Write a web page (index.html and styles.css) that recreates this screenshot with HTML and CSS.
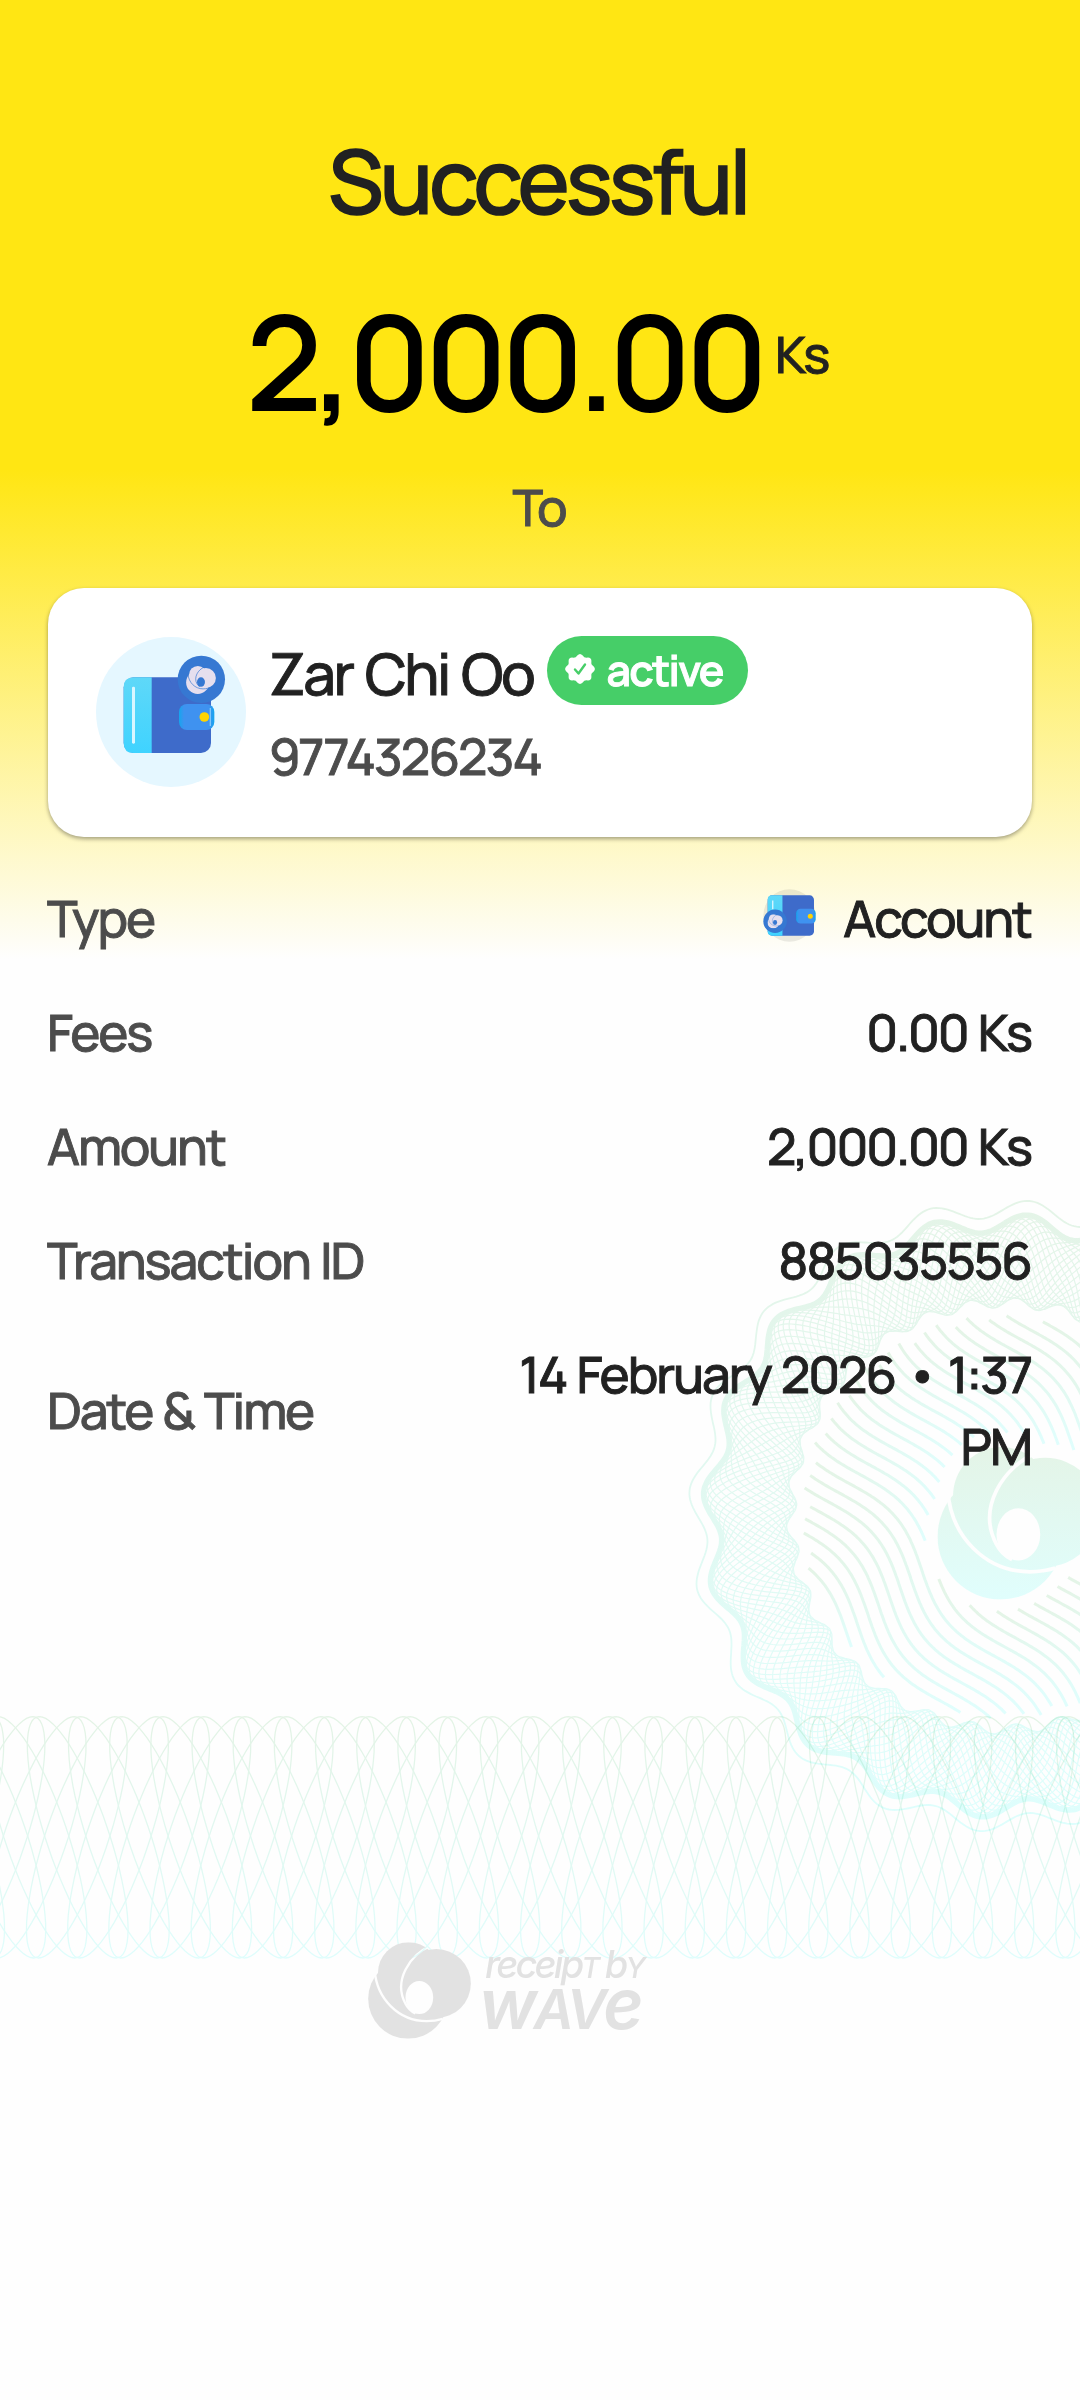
FILE: index.html
```html
<!DOCTYPE html>
<html lang="en">
<head>
<meta charset="utf-8">
<title>Receipt</title>
<link rel="stylesheet" href="styles.css">
</head>
<body>
<svg class="defs" width="0" height="0" aria-hidden="true">
  <defs>
    <mask id="swirl-cut" maskUnits="userSpaceOnUse" x="80" y="60" width="320" height="300">
      <g fill="#fff">
        <circle cx="206" cy="236" r="119.5"/>
        <circle cx="208" cy="158" r="92"/>
        <circle cx="291" cy="190" r="103.5"/>
      </g>
      <g fill="none" stroke="#000" stroke-width="7">
        <path d="M106 150C112 236 178 303 262 303C280 303 294 301 310 296"/>
        <path d="M276 76C210 104 162 182 198 250C204 262 214 273 228 280"/>
      </g>
      <ellipse cx="240" cy="232" rx="41.5" ry="49.5" fill="#000"/>
    </mask>
    <symbol id="swirl" viewBox="86 66 309 290">
      <rect x="80" y="60" width="320" height="300" mask="url(#swirl-cut)"/>
    </symbol>
    <linearGradient id="fold" x1="0" y1="0" x2="0" y2="1"><stop offset="0" stop-color="#5fd8f8"/><stop offset="1" stop-color="#3fd3ff"/></linearGradient>
    <linearGradient id="clasp" x1="0" y1="0" x2="1" y2="0"><stop offset="0" stop-color="#14a6ef"/><stop offset=".14" stop-color="#3f92f0"/><stop offset=".85" stop-color="#3f92f0"/><stop offset="1" stop-color="#14a6ef"/></linearGradient>
    <linearGradient id="line-tint" x1="0" y1="0" x2="0" y2="1"><stop offset="0" stop-color="#e4f4e6"/><stop offset="1" stop-color="#e0fefd"/></linearGradient>
    <linearGradient id="seal-tint" gradientUnits="userSpaceOnUse" x1="0" y1="1200" x2="0" y2="1832"><stop offset="0" stop-color="#e4f4e7"/><stop offset="1" stop-color="#defefd"/></linearGradient>
  </defs>
</svg>

<main class="receipt">
  <svg class="backdrop" viewBox="0 0 1080 2400" aria-hidden="true">
    <g id="seal" fill="none" stroke="url(#seal-tint)"></g>
    <g id="waves" fill="none" stroke="url(#line-tint)" stroke-width="3"></g>
    <use href="#swirl" x="937.3" y="1447" width="162.7" height="152.7" fill="url(#line-tint)"/>
    <g id="band" class="band" fill="none" stroke="url(#line-tint)" stroke-width="1.3"></g>
  </svg>

  <h1 class="title">Successful</h1>
  <div class="total"><span class="total-value">2,000.00</span><span class="total-unit">Ks</span></div>
  <p class="to">To</p>

  <section class="card">
    <svg class="avatar" viewBox="198 201 450 450">
      <circle cx="423" cy="426" r="225" fill="#e5f7ff"/>
      <rect x="281" y="322" width="262" height="227" rx="30" fill="#3e6bca"/>
      <path d="M365 322V549H311Q281 549 281 519V352Q281 322 311 322Z" fill="url(#fold)"/>
      <rect x="306" y="350" width="9" height="171" rx="4" fill="#d9f6ff"/>
      <circle cx="514" cy="328" r="71" fill="#3678d2"/>
      <use href="#swirl" x="468" y="288" width="90" height="84" fill="#e6dfee"/>
      <rect x="447" y="402" width="106" height="78" rx="24" fill="url(#clasp)"/>
      <path d="M541 414V468" stroke="#7fc6fb" stroke-width="4"/>
      <circle cx="523" cy="441" r="14.5" fill="#ffd400"/>
    </svg>
    <div class="payee">
      <div class="payee-top">
        <span class="payee-name">Zar Chi Oo</span>
        <span class="pill">
          <svg class="tick" viewBox="-15 -15 30 30"><path id="rosette" fill="#fff"/><path d="M-5 .5L-1.5 4.5L5 -4.5" fill="none" stroke="#46ce68" stroke-width="2.4" stroke-linecap="round" stroke-linejoin="round"/></svg>
          active
        </span>
      </div>
      <div class="payee-phone">9774326234</div>
    </div>
  </section>

  <dl class="rows">
    <div class="row"><dt>Type</dt><dd class="with-icon">
      <svg class="mini" viewBox="129 86 158 158">
        <circle cx="208" cy="165" r="78" fill="#000" fill-opacity=".08"/>
        <rect x="143" y="105" width="138" height="120" rx="13" fill="#3e6bca"/>
        <path d="M187 105V225H156Q143 225 143 212V118Q143 105 156 105Z" fill="url(#fold)"/>
        <path d="M158 120V146" stroke="#d9f6ff" stroke-width="4"/>
        <circle cx="165" cy="182" r="35" fill="#3678d2"/>
        <use href="#swirl" x="142" y="161" width="46" height="43" fill="#e6dfee"/>
        <rect x="228" y="145" width="58" height="44" rx="13" fill="url(#clasp)"/>
        <circle cx="270" cy="167" r="7.5" fill="#ffd400"/>
      </svg>Account</dd></div>
    <div class="row"><dt>Fees</dt><dd>0.00 Ks</dd></div>
    <div class="row"><dt>Amount</dt><dd>2,000.00 Ks</dd></div>
    <div class="row"><dt>Transaction ID</dt><dd>885035556</dd></div>
    <div class="row"><dt>Date &amp; Time</dt><dd>14 February 2026 • 1:37 PM</dd></div>
  </dl>

  <footer class="brand">
    <svg class="brand-mark" viewBox="86 66 309 290"><use href="#swirl" x="86" y="66" width="309" height="290" fill="#e2e2e2"/></svg>
    <div class="brand-text">
      <div class="brand-by">receip<span class="small">T</span> b<span class="small">Y</span></div>
      <div class="brand-name"><span class="tall">w</span>AV<span class="tall">e</span></div>
    </div>
  </footer>
</main>
<script src="guilloche.js"></script>
</body>
</html>
```
FILE: styles.css
```css
* { box-sizing: border-box; margin: 0; padding: 0; }

body {
  width: 1080px;
  height: 2400px;
  overflow: hidden;
  background: #fefefe;
  font-family: Manrope, Inter, sans-serif;
  font-weight: 500;
  letter-spacing: -.04em;
  color: #212121;
  -webkit-text-stroke: .9px;
}

.defs { position: absolute; }

.receipt {
  position: relative;
  height: 2400px;
  padding: 131px 48px 0;
  overflow: hidden;
  background: linear-gradient(#ffe613 0, #ffe613 470px, #fefefe 960px);
}

.receipt > * { position: relative; }

.receipt > .backdrop {
  position: absolute;
  inset: 0;
  width: 1080px;
  height: 2400px;
}

.band { mix-blend-mode: multiply; }

.title {
  font-size: 87.5px;
  font-weight: 500;
  line-height: 100px;
  letter-spacing: -.04em;
  text-align: center;
  text-indent: -4px;
  -webkit-text-stroke: 1.6px;
}

.total {
  display: flex;
  justify-content: center;
  gap: 12px;
  height: 140px;
  margin-top: 59px;
  padding-right: 5px;
}

.total-value {
  font-size: 129px;
  line-height: 141px;
  letter-spacing: -4.1px;
  color: #000;
  -webkit-text-stroke: 2px;
}

.total-unit {
  margin-top: 28px;
  font-size: 51px;
  line-height: 72px;
  letter-spacing: -.04em;
}

.to {
  margin-top: 41px;
  font-size: 51px;
  line-height: 72px;
  letter-spacing: -.04em;
  text-align: center;
  text-indent: -2px;
  color: #4c4c4c;
}

.card {
  display: flex;
  align-items: flex-start;
  gap: 23px;
  height: 249px;
  margin-top: 45px;
  padding: 49px 48px;
  border-radius: 36px;
  background: #fff;
  box-shadow: 0 2px 4px rgba(0, 0, 0, .36);
}

.avatar { width: 150px; height: 150px; }

.payee { margin-top: -2px; }

.payee-top { display: flex; align-items: flex-start; gap: 13px; }

.payee-name {
  font-size: 58px;
  line-height: 75px;
  letter-spacing: -.04em;
  word-spacing: 2.5px;
}

.pill {
  display: flex;
  align-items: center;
  gap: 12px;
  height: 69px;
  margin-top: 1px;
  padding: 0 25px 3px 18px;
  border-radius: 35px;
  background: #46ce68;
  color: #fff;
  font-size: 43px;
  font-weight: 600;
  letter-spacing: -.04em;
}

.tick { width: 30px; height: 30px; }

.payee-phone {
  margin-top: 16px;
  font-size: 51px;
  line-height: 60px;
  letter-spacing: -.038em;
  color: #4c4c4c;
}

.rows {
  display: flex;
  flex-direction: column;
  gap: 42px;
  margin: 45px 1px 0 -1px;
  font-size: 51px;
  line-height: 72px;
  letter-spacing: -.04em;
}

.row {
  display: flex;
  align-items: center;
  justify-content: space-between;
  word-spacing: 2px;
}

.row dt { color: #4c4c4c; }

.row dd { max-width: 560px; text-align: right; }

.row .with-icon { display: flex; align-items: center; gap: 27px; }

.mini { width: 53px; height: 53px; margin-top: -6px; }

.brand {
  display: flex;
  align-items: flex-start;
  gap: 14px;
  margin: 460px 0 0 320px;
  color: #e2e2e2;
  font-family: Inter, sans-serif;
  font-style: italic;
  -webkit-text-stroke: 0;
}

.brand-mark { width: 103px; height: 97px; }

.brand-by {
  margin-top: 2px;
  font-size: 38px;
  line-height: 40px;
  letter-spacing: -2.8px;
}

.brand-by .small { font-size: 29px; }

.brand-name {
  margin: -4px 0 0 -6px;
  font-size: 55px;
  font-weight: 600;
  line-height: 50px;
  letter-spacing: -3.2px;
}

.brand-name .tall { font-size: 69px; line-height: 40px; }
```
FILE: guilloche.js
```javascript
const NS = 'http://www.w3.org/2000/svg';
const CX = 1004.5, CY = 1516, RAD = Math.PI / 180;

function addPath(parent, points, width) {
  const path = document.createElementNS(NS, 'path');
  path.setAttribute('d', 'M' + points.map(p => p[0].toFixed(1) + ' ' + p[1].toFixed(1)).join('L'));
  if (width) path.setAttribute('stroke-width', width);
  parent.appendChild(path);
}

function ring(radius, step) {
  const pts = [];
  for (let a = 0; a <= 360; a += step) {
    const r = radius(a);
    pts.push([CX + r * Math.sin(a * RAD), CY - r * Math.cos(a * RAD)]);
  }
  return pts;
}

// Seal: a fine outline, a heavy rim, and a mesh woven between rim and inner edge
const seal = document.getElementById('seal');
const outer = a => Math.cos(20 * (a - 4.5) * RAD);
const inner = a => Math.cos(30 * (a - 3) * RAD);
addPath(seal, ring(a => 307 + 9 * outer(a), .5), 1.8);
addPath(seal, ring(a => 293 + 9 * outer(a), .5), 5);
for (let i = 0; i < 22; i++) {
  addPath(seal, ring(a => {
    const hi = 291 + 9 * outer(a), lo = 213 + 5 * inner(a);
    return (hi + lo) / 2 + (hi - lo) / 2 * Math.cos((10 * a + i * 360 / 22) * RAD);
  }, .5), 1.2);
}

// Waves: parallel rippled lines inside the seal, interrupted around the emblem
const waves = document.getElementById('waves');
const ux = .643, uy = .766;
const visible = (x, y) => {
  const dx = x - CX, dy = y - CY;
  const a = Math.atan2(dx, -dy) / RAD;
  if (Math.hypot(dx, dy) > 200 + 4 * inner(a)) return false;
  return Math.hypot(x - 1000.5, y - 1536) > 75
    && Math.hypot(x - 1001, y - 1495) > 62
    && Math.hypot(x - 1045, y - 1512) > 68;
};
for (let k = -16; k <= 16; k++) {
  let run = [];
  for (let s = -230; s <= 230; s += 2) {
    const total = s + CX * ux + CY * uy;
    const v = k * 14 + 14 * Math.sin(2 * Math.PI * (total - 1795) / 225);
    const x = CX + s * ux - v * uy, y = CY + s * uy + v * ux;
    if (visible(x, y)) run.push([x, y]);
    else { if (run.length > 4) addPath(waves, run); run = []; }
  }
}

// Band: leaning ellipses repeated across the page together with their mirror images
const band = document.getElementById('band');
for (let k = -3; k <= 28; k++) {
  for (const side of [1, -1]) {
    const pts = [];
    for (let t = 0; t <= 360; t += 5) {
      const dx = 41.6 - 38.3 * Math.cos(t * RAD) - 32.7 * Math.sin(t * RAD);
      pts.push([36.1 + side * dx + k * 41.17, 1837.3 - 120.7 * Math.cos(t * RAD)]);
    }
    addPath(band, pts);
  }
}

// Scalloped edge of the status tick
const edge = [];
for (let a = 0; a < 360; a += 5) {
  const r = 13.7 + 1.2 * Math.cos(8 * a * RAD);
  edge.push((r * Math.sin(a * RAD)).toFixed(2) + ' ' + (-r * Math.cos(a * RAD)).toFixed(2));
}
document.getElementById('rosette').setAttribute('d', 'M' + edge.join('L') + 'Z');
```
